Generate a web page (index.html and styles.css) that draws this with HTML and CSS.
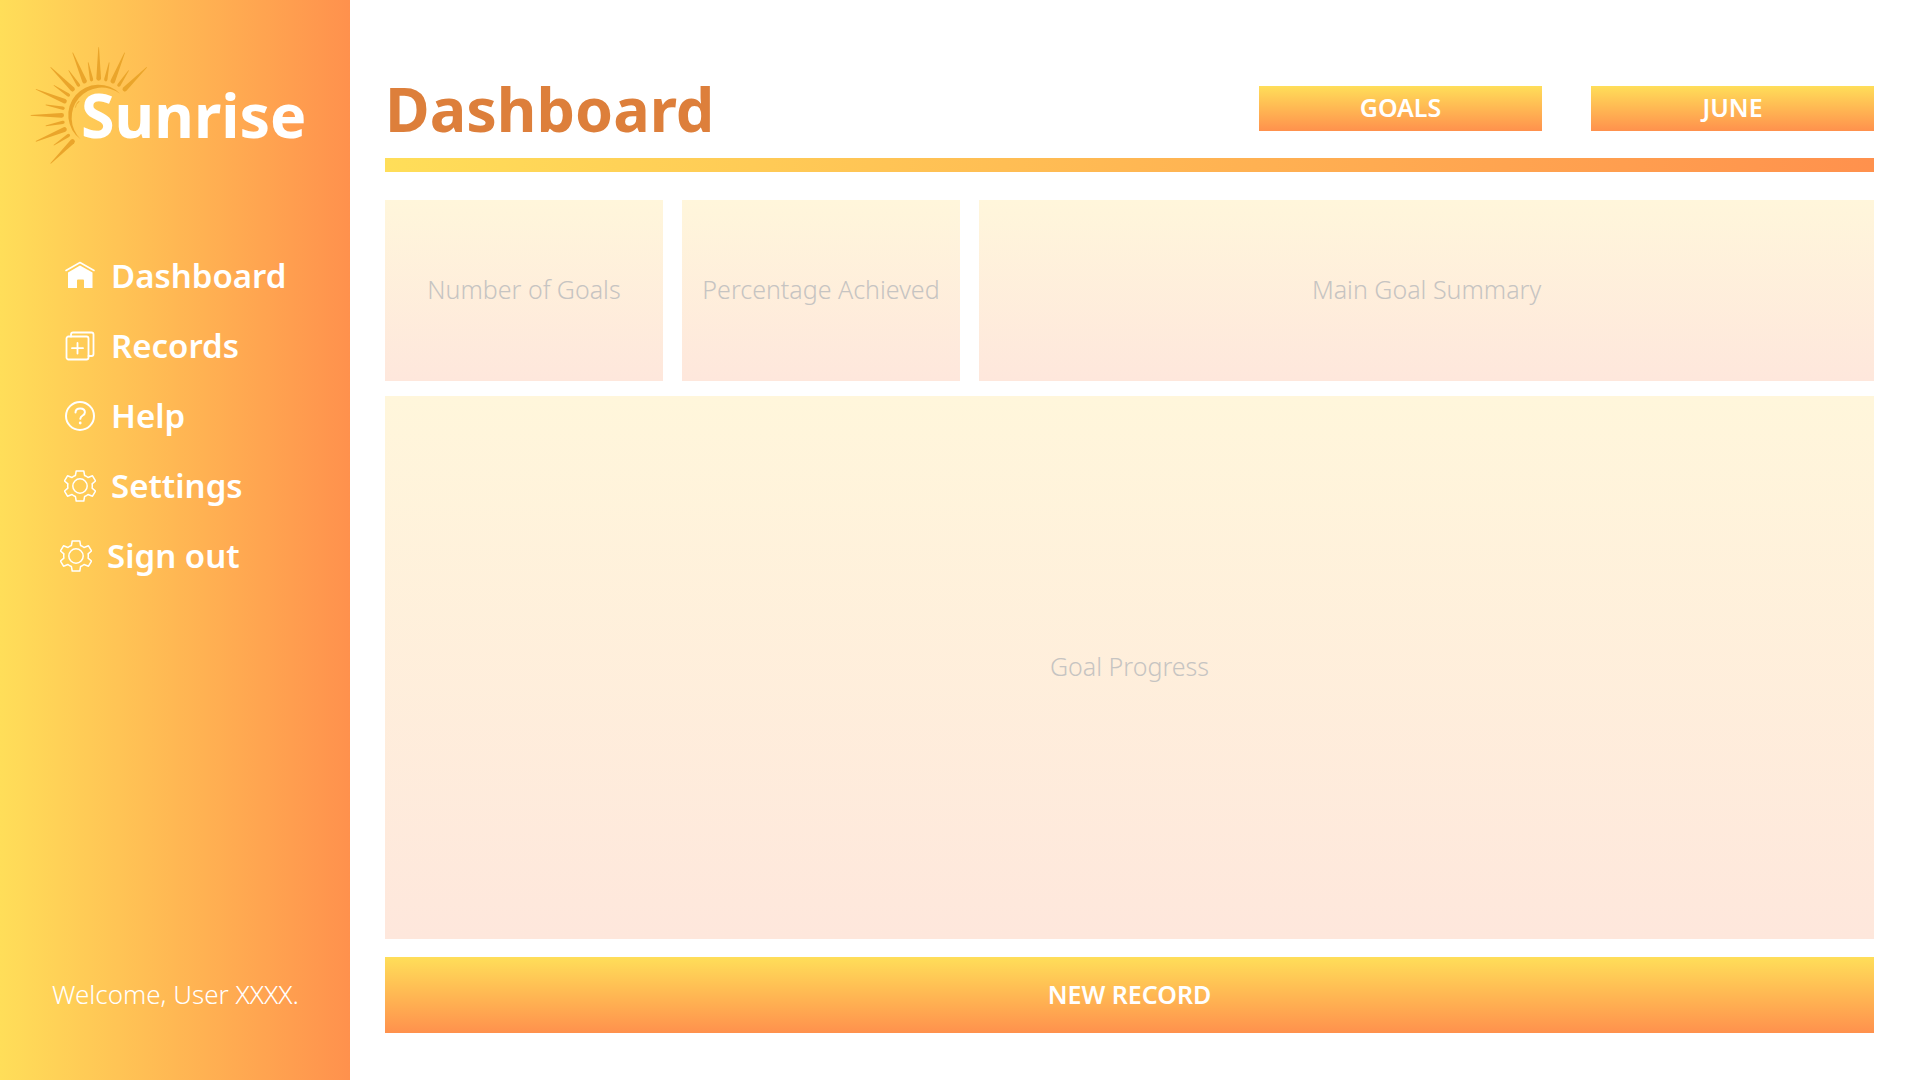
FILE: index.html
```html
<!DOCTYPE html>
<html lang="en">
<head>
<meta charset="utf-8">
<meta name="viewport" content="width=device-width, initial-scale=1">
<title>Sunrise – Dashboard</title>
<link rel="stylesheet" href="styles.css">
</head>
<body>
<svg class="defs" aria-hidden="true">
  <defs>
    <path id="ray-long" d="M235 34 H237 L243 127 Q243 134 236 134 Q229 134 229 127 Z"/>
    <path id="ray-short" d="M235 76 H237 L241 128 Q241 134 236 134 Q231 134 231 128 Z"/>
    <symbol id="gear" viewBox="0 0 32 32">
      <g fill="none" stroke="currentColor" stroke-width="1.5" stroke-linejoin="round">
        <circle cx="16" cy="16" r="7.2"/>
        <path d="M12.2 1h7.6l.8 4.5q2 .8 3.400 2l4.500-1.700 3 5.200-3.400 2.900q.4 2.100 0 4.200l3.400 2.900-3 5.200-4.500-1.700q-1.400 1.200-3.400 2l-.8 4.500h-7.600l-.8-4.500q-2-.8-3.400-2l-4.500 1.700-3-5.200 3.400-2.900q-.4-2.100 0-4.200L.5 11l3-5.200L8 7.500q1.400-1.200 3.400-2z"/>
      </g>
    </symbol>
  </defs>
</svg>
<div class="app">
  <aside class="sidebar">
    <a class="brand" href="#">
      <svg class="sun" viewBox="0 0 420 405" aria-hidden="true">
        <g fill="#eaa52b">
          <use href="#ray-long" transform="rotate(-135 236 238)"/>
          <use href="#ray-long" transform="rotate(-112.500 236 238)"/>
          <use href="#ray-long" transform="rotate(-90 236 238)"/>
          <use href="#ray-long" transform="rotate(-67.500 236 238)"/>
          <use href="#ray-long" transform="rotate(-45 236 238)"/>
          <use href="#ray-long" transform="rotate(-22.500 236 238)"/>
          <use href="#ray-long"/>
          <use href="#ray-long" transform="rotate(22.500 236 238)"/>
          <use href="#ray-long" transform="rotate(45 236 238)"/>
          <use href="#ray-short" transform="rotate(-123.750 236 238)"/>
          <use href="#ray-short" transform="rotate(-101.250 236 238)"/>
          <use href="#ray-short" transform="rotate(-78.750 236 238)"/>
          <use href="#ray-short" transform="rotate(-56.250 236 238)"/>
          <use href="#ray-short" transform="rotate(-33.750 236 238)"/>
          <use href="#ray-short" transform="rotate(-11.250 236 238)"/>
          <use href="#ray-short" transform="rotate(11.250 236 238)"/>
          <use href="#ray-short" transform="rotate(33.750 236 238)"/>
          <path d="M300 173 A90.700 90.700 0 1 0 182 310 A90.600 90.600 0 0 1 300 173Z"/>
        </g>
        <path d="M166 215q2-12 10-19M172 203l6-8" fill="none" stroke="#eaa52b" stroke-width="2"/>
      </svg>
      <span class="brand-name">Sunrise</span>
    </a>
    <nav>
      <ul class="nav">
        <li><a href="#" aria-current="page">
          <svg class="icon" viewBox="0 0 32 32" aria-hidden="true"><path d="M2 10.500 16 2.500l14 8" fill="none" stroke="currentColor" stroke-width="1.600" stroke-linecap="round" stroke-linejoin="round"/><path d="M16 5.500 28.500 12.600V28H20v-7.500q0-1-1-1h-5q-1 0-1 1V28H4V12.600Z" fill="currentColor"/></svg>
          Dashboard</a></li>
        <li><a href="#">
          <svg class="icon" viewBox="0 0 32 32" aria-hidden="true"><g fill="none" stroke="currentColor" stroke-width="1.800" stroke-linecap="round" stroke-linejoin="round"><rect x="2.500" y="6.500" width="22" height="23" rx="2"/><path d="M7 6.500V4.500q0-2 2-2h18.500q2 0 2 2V24q0 2-2 2h-3M13.500 13v10.500M8 18.200h11"/></g></svg>
          Records</a></li>
        <li><a href="#">
          <svg class="icon" viewBox="0 0 32 32" aria-hidden="true"><g fill="none" stroke="currentColor" stroke-width="2" stroke-linecap="round" stroke-linejoin="round"><circle cx="16" cy="16" r="14"/><path d="M11.500 12.500q0-4 4.700-4t4.700 3.700q0 2-2.200 3.300t-2.400 3.300"/></g><circle cx="16.200" cy="23" r="1.400" fill="currentColor"/></svg>
          Help</a></li>
        <li><a href="#">
          <svg class="icon" aria-hidden="true"><use href="#gear"/></svg>
          Settings</a></li>
        <li class="sign-out"><a href="#">
          <svg class="icon" aria-hidden="true"><use href="#gear"/></svg>
          Sign out</a></li>
      </ul>
    </nav>
    <p class="welcome">Welcome, User XXXX.</p>
  </aside>
  <main class="main">
    <header class="header">
      <h1>Dashboard</h1>
      <div class="filters">
        <button class="button" type="button">GOALS</button>
        <button class="button" type="button">JUNE</button>
      </div>
    </header>
    <div class="rule"></div>
    <div class="cards">
      <section class="card">Number of Goals</section>
      <section class="card">Percentage Achieved</section>
      <section class="card">Main Goal Summary</section>
    </div>
    <section class="card progress">Goal Progress</section>
    <button class="button new-record" type="button">NEW RECORD</button>
  </main>
</div>
</body>
</html>
```
FILE: styles.css
```css
* { box-sizing: border-box; }

body {
  margin: 0;
  background: #fff;
  font-family: "Noto Sans", "Open Sans", sans-serif;
  font-size: 25px;
}

.defs { position: absolute; width: 0; height: 0; }

.app { display: flex; min-height: 100vh; }

.sidebar {
  display: flex;
  flex-direction: column;
  flex: 0 0 350px;
  padding: 35px 20px 66px;
  background: linear-gradient(90deg, #ffde59, #ff914d);
  color: #fff;
}

.sidebar a { color: inherit; text-decoration: none; }

.brand { display: grid; align-items: center; height: 136px; }
.sun { grid-area: 1 / 1; width: 140px; height: 135px; }
.brand-name {
  grid-area: 1 / 1;
  margin-left: 61px;
  padding-top: 24px;
  font-size: 61px;
  font-weight: 700;
  line-height: 72px;
}

.nav {
  display: flex;
  flex-direction: column;
  gap: 30px;
  margin: 85px 0 0;
  padding: 0 0 0 44px;
  list-style: none;
}
.nav a {
  display: flex;
  align-items: center;
  gap: 15px;
  font-size: 33px;
  font-weight: 600;
  line-height: 40px;
}
.sign-out { margin-left: -4px; }
.icon { flex: none; width: 32px; height: 32px; }

.welcome {
  margin: auto 0 0;
  padding-left: 32px;
  font-size: 26px;
  font-weight: 300;
  line-height: 40px;
}

.main {
  display: flex;
  flex: 1;
  flex-direction: column;
  min-width: 0;
  padding: 72px 46px 47px 35px;
}

.header {
  display: flex;
  align-items: center;
  justify-content: space-between;
  height: 72px;
}
h1 {
  margin: 0;
  padding-top: 2px;
  color: #dd7f3b;
  font-size: 61px;
  font-weight: 700;
  line-height: 72px;
}
.filters { display: flex; gap: 49px; }

.button {
  width: 283px;
  height: 45px;
  padding: 0 0 2px;
  border: 0;
  background: linear-gradient(#ffde59, #ff914d);
  color: #fff;
  font: inherit;
  font-weight: 600;
}

.rule {
  height: 14px;
  margin: 14px 0 28px;
  background: linear-gradient(90deg, #ffde59, #ff914d);
}

.cards {
  display: grid;
  grid-template-columns: 278fr 278fr 895fr;
  gap: 19px;
}
.card {
  display: flex;
  align-items: center;
  justify-content: center;
  min-height: 181px;
  padding-bottom: 3px;
  background: linear-gradient(#fff6db, #fee7dc);
  color: #c6c4c2;
  font-weight: 350;
}
.progress { flex: 1; margin: 15px 0 18px; }
.new-record { width: 100%; height: 76px; }
```
